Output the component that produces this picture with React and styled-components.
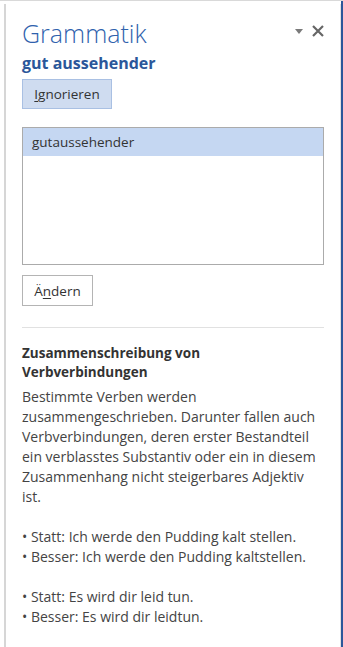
import React from 'react';
import styled, { createGlobalStyle } from 'styled-components';

const Global = createGlobalStyle`
  html, body { margin: 0; padding: 0; background: #fff; }
  body { font-family: "Open Sans", "Noto Sans", sans-serif; }
  #root { height: 647px; }
`;

const Frame = styled.div`
  display: flex;
  height: 647px;
  box-sizing: border-box;
  border-top: 1px solid #d9d9d9;
  padding-left: 4px;
  background: #fff;
`;

const Pane = styled.div`
  flex: 1;
  min-width: 0;
  display: flex;
  flex-direction: column;
  margin-top: 3px;
  border-left: 2px solid #d6d6d6;
  border-right: 1px solid #e2e2e2;
  padding: 13px 16px 0 16px;
`;

const Edge = styled.div`
  width: 2px;
  background: #2b579a;
`;

const Header = styled.div`
  display: flex;
  align-items: flex-start;
  justify-content: space-between;
`;

const Title = styled.h1`
  margin: 0;
  font-family: "Open Sans", sans-serif;
  font-weight: 300;
  font-size: 25px;
  line-height: 32px;
  color: #2f62ad;
`;

const Controls = styled.div`
  display: flex;
  align-items: center;
  gap: 9px;
  padding-top: 8px;
`;

const IconButton = styled.button`
  border: 0;
  background: none;
  padding: 0;
  display: flex;
  align-items: center;
  justify-content: center;
  cursor: pointer;
`;

const Word = styled.div`
  font-weight: 700;
  font-size: 16px;
  line-height: 22px;
  color: #2b579a;
  margin-top: 3px;
`;

const Button = styled.button`
  align-self: flex-start;
  box-sizing: border-box;
  height: ${p => p.$h}px;
  width: ${p => p.$w}px;
  padding: 0;
  font-family: "Open Sans", sans-serif;
  font-size: 13.5px;
  color: #333;
  background: ${p => (p.$primary ? '#cfdcf0' : '#fff')};
  border: 1px solid ${p => (p.$primary ? '#a9c0e3' : '#b4b4b4')};
  margin-top: ${p => p.$mt}px;
  u { text-decoration: underline; text-underline-offset: 2px; }
`;

const List = styled.div`
  margin-top: 18px;
  height: 140px;
  box-sizing: border-box;
  border: 1px solid #ababab;
  background: #fff;
`;

const Option = styled.div`
  height: 28px;
  display: flex;
  align-items: center;
  padding-left: 9px;
  font-size: 13.5px;
  color: #333;
  background: ${p => (p.$selected ? '#c5d7f2' : 'transparent')};
`;

const Divider = styled.hr`
  margin: 21px 0 0 0;
  border: 0;
  border-top: 1px solid #e1e1e1;
`;

const Help = styled.div`
  margin-top: 16px;
  color: #444;
  font-size: 14px;
  line-height: 20px;
`;

const HelpTitle = styled.div`
  font-weight: 700;
  font-size: 13.5px;
  color: #333;
  line-height: 19px;
  margin-bottom: 5px;
`;

const Para = styled.p`
  margin: 0 0 20px 0;
`;

export default function App() {
  return (
    <>
      <Global />
      <Frame>
        <Pane>
          <Header>
            <Title>Grammatik</Title>
            <Controls>
              <IconButton aria-label="Optionen">
                <svg width="8" height="5" viewBox="0 0 8 5">
                  <path d="M0 0 H8 L4 5 Z" fill="#7a7a7a" />
                </svg>
              </IconButton>
              <IconButton aria-label="Schließen">
                <svg width="12" height="12" viewBox="0 0 12 12">
                  <path d="M1 1 L11 11 M11 1 L1 11" stroke="#666" strokeWidth="2.2" />
                </svg>
              </IconButton>
            </Controls>
          </Header>
          <Word>gut aussehender</Word>
          <Button $primary $w={90} $h={30} $mt={5}>
            <u>I</u>gnorieren
          </Button>
          <List>
            <Option $selected>gutaussehender</Option>
          </List>
          <Button $w={71} $h={31} $mt={10}>
            Ä<u>n</u>dern
          </Button>
          <Divider />
          <Help>
            <HelpTitle>Zusammenschreibung von Verbverbindungen</HelpTitle>
            <Para>
              Bestimmte Verben werden zusammengeschrieben. Darunter fallen auch
              Verbverbindungen, deren erster Bestandteil ein verblasstes Substantiv
              oder ein in diesem Zusammenhang nicht steigerbares Adjektiv ist.
            </Para>
            <Para>
              • Statt: Ich werde den Pudding kalt stellen.
              <br />• Besser: Ich werde den Pudding kaltstellen.
            </Para>
            <Para>
              • Statt: Es wird dir leid tun.
              <br />• Besser: Es wird dir leidtun.
            </Para>
          </Help>
        </Pane>
        <Edge />
      </Frame>
    </>
  );
}
